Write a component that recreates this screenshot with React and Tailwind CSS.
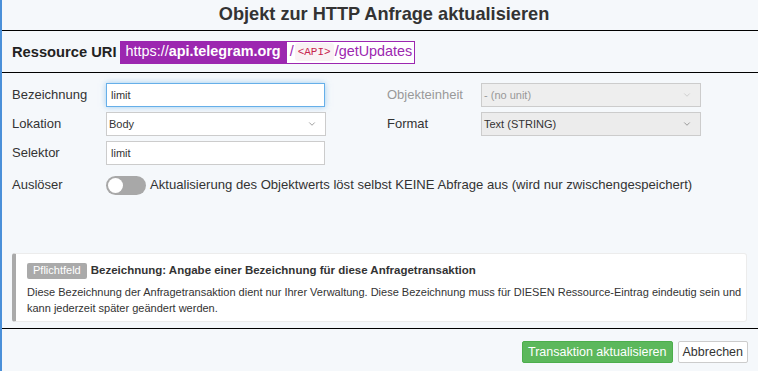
import React from 'react';
import { ChevronDown } from 'lucide-react';

const font = { fontFamily: '"Liberation Sans", Arial, sans-serif' };

const TextField = ({ value, focused }) => (
    <div
        className={
            'w-[219px] h-[24px] flex items-center pl-[4px] bg-white text-[11px] text-[#333] border ' +
            (focused
                ? 'border-[#66afe9] shadow-[0_0_6px_rgba(102,175,233,0.6)]'
                : 'border-[#cccccc]')
        }
    >
        {value}
    </div>
);

const SelectField = ({ value, disabled, tinted }) => (
    <div
        className={
            'w-[220px] h-[24px] flex items-center justify-between pl-[2px] pr-[8px] text-[11px] border border-[#cccccc] ' +
            (disabled ? 'bg-[#eeeeee] text-[#999]' : tinted ? 'bg-[#ececec] text-[#333]' : 'bg-white text-[#333]')
        }
    >
        <span>{value}</span>
        <ChevronDown size={10} strokeWidth={1.5} className={disabled ? 'text-[#bbb]' : 'text-[#666]'} />
    </div>
);

const App = () => {
    return (
        <div style={font} className="w-[758px] h-[371px] bg-[#f5f8fb] border-l-2 border-[#4a90d9] flex flex-col text-[#333]">
            {/* title */}
            <div className="h-[31px] border-b border-black flex items-center justify-center pl-[8px]">
                <h2 className="text-[18.2px] font-bold text-[#333]">Objekt zur HTTP Anfrage aktualisieren</h2>
            </div>

            {/* resource uri */}
            <div className="h-[42px] border-b border-black flex items-center pl-[10px] pt-[1px]">
                <span className="text-[14.7px] font-bold text-[#222] mr-[4px]">Ressource URI</span>
                <div className="flex h-[23px]">
                    <div className="bg-[#9c27b0] text-white text-[14.4px] flex items-center px-[5px]">
                        https://<b>api.telegram.org</b>
                    </div>
                    <div className="border border-[#9c27b0] bg-white text-[14.4px] text-[#9c27b0] flex items-center pl-[3px] pr-[2px] gap-[1px]">
                        <span>/</span>
                        <code className="font-['Liberation_Mono',monospace] text-[11px] text-[#c7254e] bg-[#f9f2f4] rounded-[3px] px-[3px] py-[1px]">&lt;API&gt;</code>
                        <span>/getUpdates</span>
                    </div>
                </div>
            </div>

            {/* form */}
            <div className="flex pl-[10px] pt-[10px]">
                <div className="w-[375px] flex flex-col">
                    <div className="flex items-center h-[24px]">
                        <span className="w-[94px] text-[13px]">Bezeichnung</span>
                        <TextField value="limit" focused />
                    </div>
                    <div className="flex items-center h-[24px] mt-[5px]">
                        <span className="w-[94px] text-[13px]">Lokation</span>
                        <SelectField value="Body" />
                    </div>
                    <div className="flex items-center h-[24px] mt-[5px]">
                        <span className="w-[94px] text-[13px]">Selektor</span>
                        <TextField value="limit" />
                    </div>
                </div>
                <div className="flex flex-col">
                    <div className="flex items-center h-[24px]">
                        <span className="w-[94px] text-[13px] text-[#999]">Objekteinheit</span>
                        <SelectField value="- (no unit)" disabled />
                    </div>
                    <div className="flex items-center h-[24px] mt-[5px]">
                        <span className="w-[94px] text-[13px]">Format</span>
                        <SelectField value="Text (STRING)" tinted />
                    </div>
                </div>
            </div>

            <div className="flex items-center pl-[10px] mt-[10px] h-[20px]">
                <span className="w-[94px] text-[13px]">Auslöser</span>
                <div className="w-[40px] h-[19px] rounded-full bg-[#a8a8a8] flex items-center pl-[2px]">
                    <div className="w-[15px] h-[15px] rounded-full bg-white" />
                </div>
                <span className="ml-[4px] text-[13.1px]">
                    Aktualisierung des Objektwerts löst selbst KEINE Abfrage aus (wird nur zwischengespeichert)
                </span>
            </div>

            {/* hint */}
            <div className="mt-[58px] mx-[10px] w-[735px] h-[69px] bg-white border border-[#ececec] border-l-4 border-l-[#aaaaaa] rounded-[3px] pl-[11px] pt-[8px]">
                <div className="flex items-center">
                    <span className="bg-[#aaaaaa] text-white text-[11px] rounded-[2px] px-[6px] h-[16px] flex items-center">Pflichtfeld</span>
                    <span className="ml-[4px] text-[11.5px] font-bold text-[#333]">
                        Bezeichnung: Angabe einer Bezeichnung für diese Anfragetransaktion
                    </span>
                </div>
                <p className="text-[11px] leading-[16px] text-[#333] mt-[5px] pr-0">
                    Diese Bezeichnung der Anfragetransaktion dient nur Ihrer Verwaltung. Diese Bezeichnung muss für DIESEN Ressource-Eintrag eindeutig sein und kann jederzeit später geändert werden.
                </p>
            </div>

            <div className="border-b border-black mt-[6px]" />

            {/* footer */}
            <div className="flex justify-end gap-[5px] pr-[10px] pt-[12px]">
                <button className="h-[22px] px-[5px] bg-[#5cb85c] border border-[#4cae4c] text-white text-[12.5px] rounded-[2px]">
                    Transaktion aktualisieren
                </button>
                <button className="h-[22px] px-[4px] bg-white border border-[#cccccc] text-[#333] text-[12.5px] rounded-[2px]">
                    Abbrechen
                </button>
            </div>
        </div>
    );
};

export default App;
